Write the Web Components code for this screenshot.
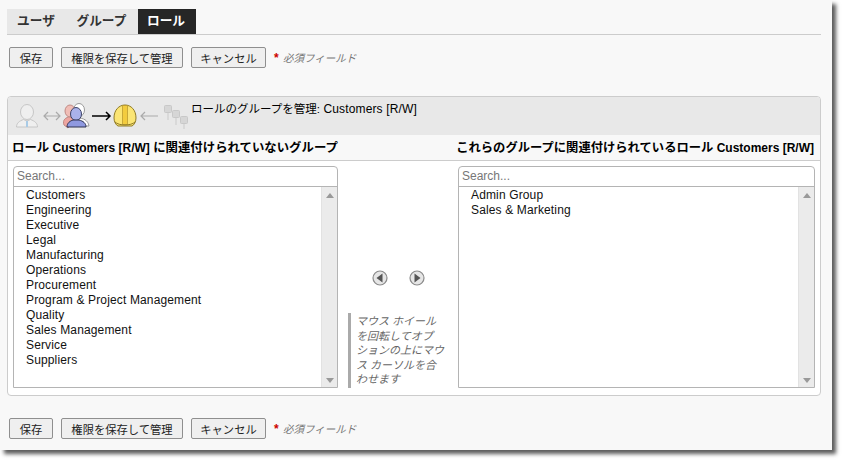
<!DOCTYPE html>
<html lang="ja">
<head>
<meta charset="utf-8">
<title>ロール</title>
<style>
  html, body { margin: 0; padding: 0; background: #fff; }
  body { height: 465px; font: 12px "Liberation Sans", "Noto Sans CJK JP", sans-serif; color: #000; overflow: hidden; }
</style>
</head>
<body>

<role-page>
  <tab-bar slot="tabs">
    <tab-item style="width:62px;padding-right:4px">ユーザ</tab-item>
    <tab-item style="width:69px;padding-right:4px">グループ</tab-item>
    <tab-item style="width:58px;padding-right:2px" active>ロール</tab-item>
  </tab-bar>
  <form-actions slot="top"></form-actions>
  <group-panel slot="panel"></group-panel>
  <form-actions slot="bottom"></form-actions>
</role-page>

<script>
class RolePage extends HTMLElement {
  constructor() {
    super();
    this.attachShadow({ mode: 'open' }).innerHTML = `
      <style>
        :host {
          display: flex;
          flex-direction: column;
          box-sizing: border-box;
          width: 832px;
          height: 450px;
          padding: 9px 11px 0 7px;
          background: #f8f8f8;
          box-shadow: 4px 4px 4px #5c5c5c;
        }
        .top { margin: 12px 0 28px 2px; }
        .bottom { margin: 22px 0 0 2px; }
      </style>
      <slot name="tabs"></slot>
      <div class="top"><slot name="top"></slot></div>
      <slot name="panel"></slot>
      <div class="bottom"><slot name="bottom"></slot></div>
    `;
  }
}

class TabBar extends HTMLElement {
  constructor() {
    super();
    this.attachShadow({ mode: 'open' }).innerHTML = `
      <style>
        :host { display: flex; height: 25px; border-bottom: 1px solid #ccc; flex: none; }
      </style>
      <slot></slot>
    `;
  }
}

class TabItem extends HTMLElement {
  constructor() {
    super();
    this.attachShadow({ mode: 'open' }).innerHTML = `
      <style>
        :host {
          display: block;
          box-sizing: border-box;
          text-align: center;
          line-height: 25px;
          font-size: 12.7px;
          font-weight: bold;
          background: #e8e8e8;
          color: #333;
        }
        :host([active]) { background: #262626; color: #fff; }
      </style>
      <slot></slot>
    `;
  }
}

class FormActions extends HTMLElement {
  constructor() {
    super();
    this.attachShadow({ mode: 'open' }).innerHTML = `
      <style>
        :host { display: flex; align-items: center; height: 21px; font-size: 11.3px; }
        button {
          box-sizing: border-box;
          height: 21px;
          margin: 0 8px 0 0;
          padding: 0;
          font: inherit;
          color: #222;
          background: #efefef;
          border: 1px solid #8f8f8f;
          border-radius: 2px;
        }
        .req { color: #c00; font-weight: bold; font-size: 12px; width: 9px; }
        em { color: #777; font-size: 10.5px; }
      </style>
      <button style="width:44px">保存</button>
      <button style="width:122px">権限を保存して管理</button>
      <button style="width:75px">キャンセル</button>
      <span class="req">*</span><em>必須フィールド</em>
    `;
  }
}

class StepIcons extends HTMLElement {
  constructor() {
    super();
    this.attachShadow({ mode: 'open' }).innerHTML = `
      <style>
        :host { display: block; width: 176px; height: 32px; flex: none; }
        svg { display: block; }
      </style>
      <svg width="176" height="32" viewBox="0 0 176 32">
        <!-- user -->
        <g fill="#efefef" stroke="#c6c6c6">
          <ellipse cx="13" cy="13" rx="6.5" ry="7.5"/>
          <path d="M2.5 28c0-4 3-6 7-7.500l3.500 1.500 3.500-1.500c4 1.500 7 3.500 7 7.500z"/>
        </g>
        <path d="M13 22v6" stroke="#a9cbe6" stroke-width="2"/>
        <!-- double arrow -->
        <path d="M30 17h16M34 13l-4 4 4 4M42 13l4 4-4 4" fill="none" stroke="#aaa" stroke-width="1.2"/>
        <!-- group -->
        <g stroke="#9a9a9a">
          <ellipse cx="65" cy="11" rx="5.500" ry="6.500" fill="#fff"/>
          <path d="M64 19c5 0 10 2 11 8H64z" fill="#fff"/>
        </g>
        <ellipse cx="56" cy="12" rx="5" ry="6" fill="#f0bdb6" stroke="#c08a84"/>
        <path d="M50 26c-2-5 2-8 6-8l6 3-8 8z" fill="#eda5a0" stroke="#c08a84"/>
        <ellipse cx="62" cy="15" rx="5.500" ry="6.500" fill="#aab2ea" stroke="#3e4468"/>
        <path d="M53 28c0-4 3-6 6-7h6c4 1 7 3 7 7z" fill="#8f99e0" stroke="#2e3350"/>
        <!-- black arrow -->
        <path d="M78 17h18M92 13l4 4-4 4" fill="none" stroke="#000" stroke-width="1.5"/>
        <!-- helmet -->
        <path d="M100 19c0-8 5-13 11-13s11 5 11 13c0 4-2 7-4 8h-14c-2-1-4-4-4-8z" fill="#fbe574" stroke="#8f7a26"/>
        <path d="M108.500 6.500h5v19h-5z" fill="#f3cc3e" stroke="#b3932a" stroke-width=".7"/>
        <path d="M101 23c4 4 16 4 20 0" fill="none" stroke="#8f7a26"/>
        <!-- grey arrow -->
        <path d="M127 17h17M131 13l-4 4 4 4" fill="none" stroke="#aaa" stroke-width="1.2"/>
        <!-- nodes -->
        <g fill="#d6d6d6" stroke="#c8c8c8">
          <rect x="150.500" y="6.500" width="7" height="7" rx="1"/>
          <rect x="158.500" y="11.500" width="7" height="7" rx="1"/>
          <rect x="166.500" y="17.500" width="7" height="7" rx="1"/>
        </g>
        <path d="M154 14v7M162 19v7M170 25v5" stroke="#d4d4d4" stroke-width="1.500"/>
      </svg>
    `;
  }
}

class ListBox extends HTMLElement {
  static get observedAttributes() { return ['items']; }
  constructor() {
    super();
    this.attachShadow({ mode: 'open' }).innerHTML = `
      <style>
        :host {
          display: flex;
          flex-direction: column;
          box-sizing: border-box;
          height: 222px;
          border: 1px solid #b4b4b4;
          border-radius: 4px 4px 0 0;
          background: #fff;
        }
        .search {
          height: 19px;
          line-height: 19px;
          padding-left: 3px;
          color: #777;
          border-bottom: 1px solid #b4b4b4;
          flex: none;
        }
        .body { flex: 1; display: flex; min-height: 0; }
        ul {
          flex: 1;
          margin: 0;
          padding: 1px 0 0 12px;
          list-style: none;
          color: #111;
          letter-spacing: .14px;
        }
        li { height: 15px; line-height: 15px; }
        .bar {
          width: 16px;
          flex: none;
          background: #ebebeb;
          border-left: 1px solid #e2e2e2;
          box-sizing: border-box;
          display: flex;
          flex-direction: column;
          justify-content: space-between;
          align-items: center;
          padding: 6px 0 4px;
        }
        .up, .down { width: 0; height: 0; border: 4px solid transparent; }
        .up { border-bottom: 5px solid #999; border-top: 0; }
        .down { border-top: 5px solid #999; border-bottom: 0; }
      </style>
      <div class="search">Search...</div>
      <div class="body">
        <ul></ul>
        <div class="bar"><span class="up"></span><span class="down"></span></div>
      </div>
    `;
  }
  attributeChangedCallback() {
    this.shadowRoot.querySelector('ul').innerHTML = this.getAttribute('items')
      .split('|').map(t => `<li>${t.replace('&', '&amp;')}</li>`).join('');
  }
}

class MoveControls extends HTMLElement {
  constructor() {
    super();
    const circle = dir => `
      <svg width="16" height="16" viewBox="0 0 16 16">
        <circle cx="8" cy="8" r="7" fill="#e6e6e6" stroke="#8a8a8a" stroke-width="1.200"/>
        <path d="${dir === 'l' ? 'M10.500 3.500v9L4.500 8z' : 'M5.500 3.500v9l6-4.500z'}" fill="#555"/>
      </svg>`;
    this.attachShadow({ mode: 'open' }).innerHTML = `
      <style>
        :host {
          display: flex;
          flex-direction: column;
          flex: none;
          width: 120px;
          box-sizing: border-box;
          padding: 104px 10px 0;
          height: 222px;
        }
        .btns { display: flex; justify-content: center; gap: 21px; height: 16px; margin-left: 1px; }
        svg { display: block; }
        p {
          margin: 27px 0 0;
          height: 75px;
          padding: 1px 0 0 5px;
          border-left: 3px solid #aaa;
          box-sizing: border-box;
          font-size: 11px;
          line-height: 14.600px;
          font-style: italic;
          color: #666;
          white-space: nowrap;
        }
      </style>
      <div class="btns">${circle('l')}${circle('r')}</div>
      <p>マウス ホイール<br>を回転してオプ<br>ションの上にマウ<br>ス カーソルを合<br>わせます</p>
    `;
  }
}

class GroupPanel extends HTMLElement {
  constructor() {
    super();
    this.attachShadow({ mode: 'open' }).innerHTML = `
      <style>
        :host {
          display: block;
          box-sizing: border-box;
          height: 300px;
          border: 1px solid #ccc;
          border-radius: 4px;
          background: #fff;
          overflow: hidden;
          flex: none;
        }
        .head {
          display: flex;
          height: 38px;
          padding: 2px 0 0 6px;
          box-sizing: border-box;
          background: #e8e8e8;
        }
        .title { margin: 3px 0 0 1px; line-height: 14px; letter-spacing: .14px; }
        .title span { font-size: 11.500px; letter-spacing: 0; }
        .sub {
          display: flex;
          justify-content: space-between;
          align-items: center;
          height: 26px;
          box-sizing: border-box;
          padding: 0 6px 2px 4px;
          background: #f8f8f8;
          border-bottom: 1px solid #ccc;
          font-weight: bold;
        }
        .sub i { font-style: normal; font-size: 12.400px; }
        .sub span + span i { font-size: 12.300px; }
        .cols { display: flex; padding: 5px 5px 0; }
        list-box:first-child { width: 325px; }
        list-box:last-child { width: 357px; }
      </style>
      <div class="head">
        <step-icons></step-icons>
        <div class="title"><span>ロールのグループを管理:</span> Customers [R/W]</div>
      </div>
      <div class="sub">
        <span><i>ロール</i> Customers [R/W] <i>に関連付けられていないグループ</i></span>
        <span><i>これらのグループに関連付けられているロール</i> Customers [R/W]</span>
      </div>
      <div class="cols">
        <list-box items="Customers|Engineering|Executive|Legal|Manufacturing|Operations|Procurement|Program &amp; Project Management|Quality|Sales Management|Service|Suppliers"></list-box>
        <move-controls></move-controls>
        <list-box items="Admin Group|Sales &amp; Marketing"></list-box>
      </div>
    `;
  }
}

customElements.define('role-page', RolePage);
customElements.define('tab-bar', TabBar);
customElements.define('tab-item', TabItem);
customElements.define('form-actions', FormActions);
customElements.define('step-icons', StepIcons);
customElements.define('list-box', ListBox);
customElements.define('move-controls', MoveControls);
customElements.define('group-panel', GroupPanel);
</script>
</body>
</html>
